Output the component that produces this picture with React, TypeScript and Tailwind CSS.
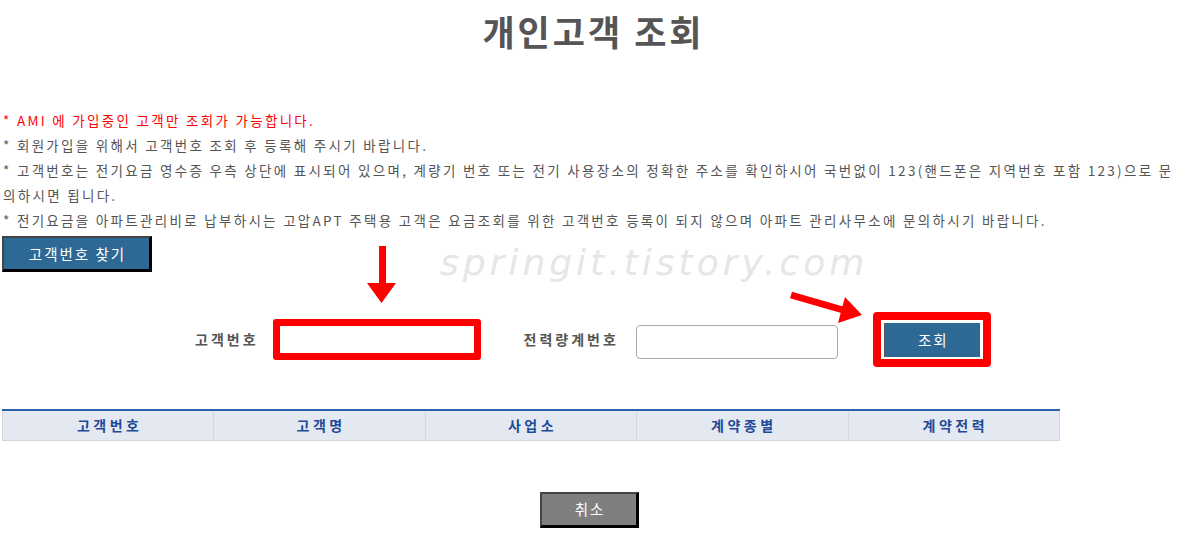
import React from 'react'

const notices = [
  { text: '* AMI 에 가입중인 고객만 조회가 가능합니다.', red: true },
  { text: '* 회원가입을 위해서 고객번호 조회 후 등록해 주시기 바랍니다.' },
  {
    text: '* 고객번호는 전기요금 영수증 우측 상단에 표시되어 있으며, 계량기 번호 또는 전기 사용장소의 정확한 주소를 확인하시어 국번없이 123(핸드폰은 지역번호 포함 123)으로 문',
  },
  { text: '의하시면 됩니다.' },
  { text: '* 전기요금을 아파트관리비로 납부하시는 고압APT 주택용 고객은 요금조회를 위한 고객번호 등록이 되지 않으며 아파트 관리사무소에 문의하시기 바랍니다.' },
]

const columns = ['고객번호', '고객명', '사업소', '계약종별', '계약전력']

const App = () => {
  return (
    <div className="relative w-[1184px] h-[536px] overflow-hidden bg-white font-['Noto_Sans_CJK_KR','Noto_Sans',sans-serif] text-[#555]">
      <h1 className="h-[58px] flex items-center justify-center pt-[2px] pl-[3px] text-[35px] font-bold tracking-[3px] text-[#555] leading-none">
        개인고객 조회
      </h1>

      <ul className="mt-[50px] pl-[3px] text-[13.5px] leading-[25px] tracking-[2.3px]">
        {notices.map((n) => (
          <li key={n.text} className={n.red ? 'text-[#ff0000] whitespace-nowrap' : 'whitespace-nowrap'}>
            {n.text}
          </li>
        ))}
      </ul>

      <button className="ml-[2px] mt-[3px] w-[150px] h-[36px] pl-[2px] bg-[#2e6996] text-white text-[14.5px] tracking-[2px] border-2 border-[#444] border-r-[3px] border-b-[3px] border-r-black border-b-black">
        고객번호 찾기
      </button>

      <div className="mt-[40px] h-[55px] flex items-center pl-[195px]">
        <label className="text-[14px] font-bold tracking-[3px] text-[#555]">고객번호</label>
        <div className="ml-[14px] w-[208px] h-[41px] border-[7px] border-[#ff0000] rounded-[3px] bg-white" />
        <label className="ml-[43px] text-[14px] font-bold tracking-[3px] text-[#555]">전력량계번호</label>
        <input className="ml-[17px] w-[202px] h-[34px] border border-[#aaa] rounded-[4px] mt-[4px]" />
        <div className="ml-[35px] w-[118px] h-[55px] border-[8px] border-[#ff0000] rounded-[4px] flex items-center justify-center">
          <button className="w-[96px] h-[34px] pl-[2px] bg-[#2e6996] text-white text-[14.5px] tracking-[2px] border-l border-[#555]">조회</button>
        </div>
      </div>

      <table className="ml-[2px] mt-[42px] w-[1058px] border-collapse border-t-2 border-t-[#2c5fae] table-fixed">
        <thead>
          <tr className="h-[30px] bg-[#e4e9f1]">
            {columns.map((c) => (
              <th key={c} className="border border-[#d3d6db] border-t-0 pl-[3px] text-[14px] font-bold tracking-[3.5px] text-[#1e4a9a]">
                {c}
              </th>
            ))}
          </tr>
        </thead>
      </table>

      <div className="mt-[51px] pl-[540px]">
        <button className="w-[99px] h-[36px] pl-[2px] bg-[#7f7f7f] text-white text-[14.5px] tracking-[2px] border-2 border-[#444] border-r-[3px] border-b-[3px] border-r-black border-b-black">
          취소
        </button>
      </div>

      {/* watermark */}
      <div className="absolute left-[440px] top-[236px] text-[36px] italic font-extralight tracking-[4px] text-[#e6e6e6] font-['DejaVu_Sans',sans-serif] pointer-events-none">
        springit.tistory.com
      </div>

      {/* annotation arrows */}
      <svg className="absolute inset-0 pointer-events-none" width="1184" height="536">
        <rect x="379" y="246" width="7" height="38" fill="#ff0000" />
        <polygon points="367,283 396,283 381.5,303" fill="#ff0000" />
        <line x1="791" y1="295" x2="843" y2="310" stroke="#ff0000" strokeWidth="7" />
        <polygon points="845,297 838,323 862,315" fill="#ff0000" />
      </svg>
    </div>
  )
}

export default App
